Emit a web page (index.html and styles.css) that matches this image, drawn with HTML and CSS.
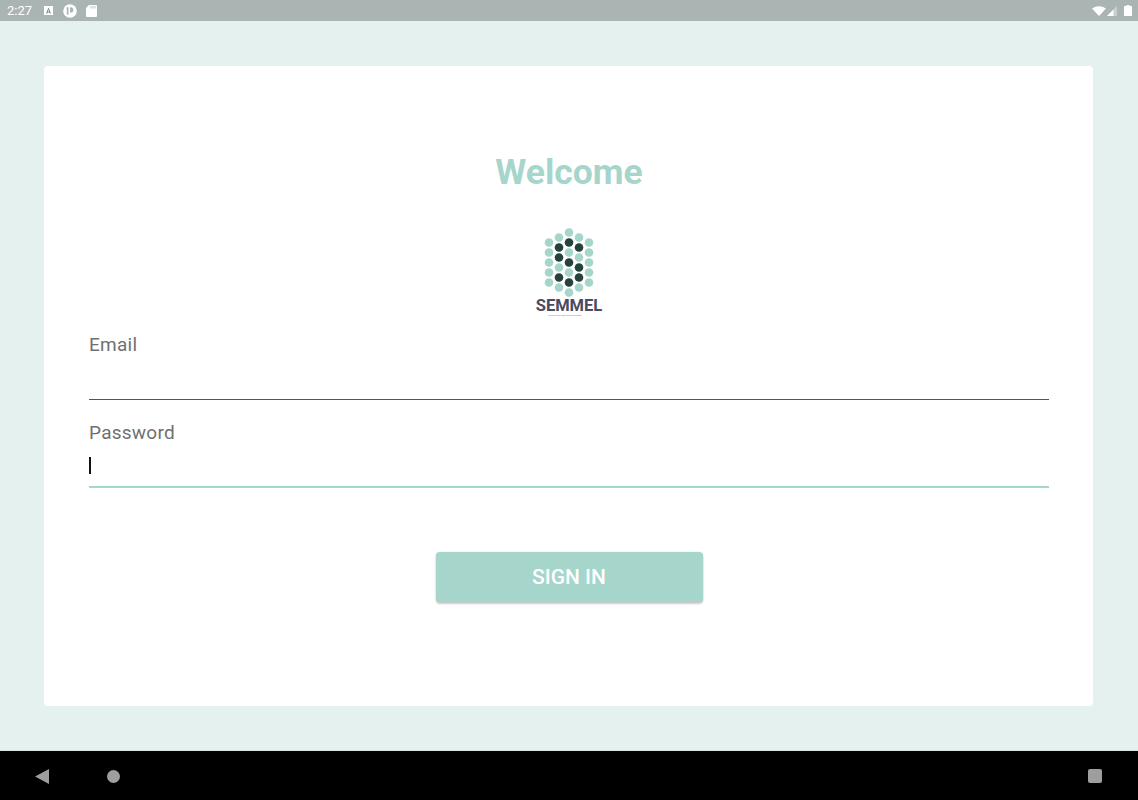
FILE: index.html
```html
<!DOCTYPE html>
<html lang="en">
<head>
    <meta charset="UTF-8">
    <title>Sign in</title>
    <link rel="stylesheet" href="styles.css">
</head>
<body>
    <div class="status-bar">
        <div class="status-left">
            <span class="clock">2:27</span>
            <svg class="icon-a" width="9" height="9" viewBox="0 0 9 9">
                <rect width="9" height="9" fill="#fff"/>
                <path fill="#7f8a89" fill-rule="evenodd" d="M4.500 1.500 2 7.500h1.200l.4-1.100h1.800l.4 1.100H7z M4.500 3.600l.6 1.800H3.900z"/>
            </svg>
            <svg class="icon-p" width="14" height="14" viewBox="0 0 14 14">
                <circle cx="7" cy="7" r="6.800" fill="#fff"/>
                <rect x="3.800" y="3.200" width="1.700" height="7.500" fill="#aab4b3"/>
                <path fill="#aab4b3" d="M7 3.200h.6a2.700 2.700 0 0 1 0 5.400H7z"/>
            </svg>
            <svg width="11" height="12" viewBox="0 0 11 12">
                <path fill="#fff" d="M3 0h7a1 1 0 0 1 1 1v10a1 1 0 0 1-1 1H1a1 1 0 0 1-1-1V3z"/>
                <path stroke="#aab4b3" stroke-width=".8" d="M5 1v2.500M7 1v2.500M9 1v2.500"/>
            </svg>
        </div>
        <div class="status-right">
            <svg class="icon-wifi" width="14" height="10" viewBox="0 0 14 10">
                <path fill="#fff" d="M0 2.500Q7-2.200 14 2.500L7 10z"/>
            </svg>
            <svg class="icon-signal" width="10" height="10" viewBox="0 0 10 10">
                <path fill="#c9cfce" d="M10 0v10H0z"/>
                <path fill="#fff" d="M6.500 3.500V10H0z"/>
            </svg>
            <svg width="8" height="11" viewBox="0 0 8 11">
                <path fill="#fff" d="M2.500 0h3v1H7.500a.5.5 0 0 1 .5.500V10.500a.5.5 0 0 1-.5.500H.5a.5.5 0 0 1-.5-.5V1.500A.5.5 0 0 1 .5 1H2.500z"/>
            </svg>
        </div>
    </div>

    <main class="screen">
        <div class="login-card">
            <h1 class="welcome">Welcome</h1>

            <div class="logo">
                <svg width="52" height="70" viewBox="0 0.500 52 70">
                    <g fill="#a6d5cb">
                        <circle cx="26" cy="5" r="4.300"/>
                        <circle cx="16" cy="10" r="4.300"/>
                        <circle cx="36" cy="10" r="4.300"/>
                        <circle cx="6" cy="15" r="4.300"/>
                        <circle cx="46" cy="15" r="4.300"/>
                        <circle cx="26" cy="25" r="4.300"/>
                        <circle cx="6" cy="25" r="4.300"/>
                        <circle cx="46" cy="25" r="4.300"/>
                        <circle cx="36" cy="30" r="4.300"/>
                        <circle cx="16" cy="40" r="4.300"/>
                        <circle cx="6" cy="35" r="4.300"/>
                        <circle cx="46" cy="35" r="4.300"/>
                        <circle cx="26" cy="45" r="4.300"/>
                        <circle cx="6" cy="45" r="4.300"/>
                        <circle cx="46" cy="45" r="4.300"/>
                        <circle cx="6" cy="55" r="4.300"/>
                        <circle cx="46" cy="55" r="4.300"/>
                        <circle cx="16" cy="60" r="4.300"/>
                        <circle cx="36" cy="60" r="4.300"/>
                        <circle cx="26" cy="65" r="4.300"/>
                    </g>
                    <g fill="#25423b">
                        <circle cx="26" cy="15" r="4.300"/>
                        <circle cx="16" cy="20" r="4.300"/>
                        <circle cx="36" cy="20" r="4.300"/>
                        <circle cx="16" cy="30" r="4.300"/>
                        <circle cx="26" cy="35" r="4.300"/>
                        <circle cx="36" cy="40" r="4.300"/>
                        <circle cx="16" cy="50" r="4.300"/>
                        <circle cx="36" cy="50" r="4.300"/>
                        <circle cx="26" cy="55" r="4.300"/>
                    </g>
                </svg>
                <div class="logo-name">SEMMEL</div>
                <div class="logo-tag">HEALTHCARE SOLUTIONS</div>
            </div>

            <div class="fields">
                <div class="field">
                    <label class="field-label" for="email">Email</label>
                    <div class="field-input" id="email"></div>
                </div>
                <div class="field field-active">
                    <label class="field-label" for="password">Password</label>
                    <div class="field-input" id="password"><span class="caret"></span></div>
                </div>
            </div>

            <button class="signin" type="button">SIGN IN</button>
        </div>
    </main>

    <div class="nav-bar">
        <div class="nav-left">
            <svg width="14" height="15" viewBox="0 0 14 15">
                <path fill="#9e9e9e" d="M14 0v15L0 7.500z"/>
            </svg>
            <svg width="13" height="13" viewBox="0 0 13 13">
                <circle cx="6.500" cy="6.500" r="6.500" fill="#9e9e9e"/>
            </svg>
        </div>
        <div class="nav-square"></div>
    </div>
</body>
</html>
```

FILE: styles.css
```css
* {
    box-sizing: border-box;
}
body {
    margin: 0;
    width: 1138px;
    height: 800px;
    display: flex;
    flex-direction: column;
    overflow: hidden;
    background-color: #e4f1ee;
    font-family: 'Roboto', sans-serif;
}

/* Barra de status */
.status-bar {
    height: 21px;
    flex-shrink: 0;
    display: flex;
    justify-content: space-between;
    align-items: center;
    padding: 0 6px 0 7px;
    background-color: #aab4b3;
}
.status-left,
.status-right {
    display: flex;
    align-items: center;
}
.clock {
    width: 37px;
    color: #fff;
    font-size: 13px;
}
.icon-a {
    margin-right: 10px;
}
.icon-p {
    margin-right: 9px;
}
.icon-wifi {
    margin-right: 1px;
}
.icon-signal {
    margin-right: 7px;
}

/* Tela principal */
.screen {
    flex: 1;
    padding: 45px 45px 44px 44px;
    border-bottom: 1px solid #d8e3e0;
}
.login-card {
    height: 640px;
    padding: 86px 44px 0 45px;
    background-color: #fff;
    border-radius: 4px;
    display: flex;
    flex-direction: column;
}
.welcome {
    margin: 0;
    height: 40px;
    line-height: 40px;
    text-align: center;
    font-size: 35.500px;
    font-weight: 700;
    color: #a6d5cb;
}
.logo {
    margin: 36px 0 15px;
    display: flex;
    flex-direction: column;
    align-items: center;
}
.logo-name {
    height: 13px;
    margin-top: 1px;
    line-height: 13px;
    font-size: 16.500px;
    font-weight: 700;
    color: #4a4a60;
}
.logo-tag {
    height: 3px;
    margin: 2px 8px 0 0;
    line-height: 3px;
    font-size: 2.500px;
    font-weight: 700;
    letter-spacing: 0.2px;
    color: #4fae9b;
    white-space: nowrap;
}
.fields {
    display: flex;
    flex-direction: column;
    gap: 20px;
}
.field {
    height: 68px;
    display: flex;
    flex-direction: column;
}
.field-label {
    height: 25px;
    padding-top: 1px;
    line-height: 24px;
    font-size: 19px;
    letter-spacing: 0.25px;
    color: #707070;
}
.field-input {
    flex: 1;
    display: flex;
    align-items: center;
    border-bottom: 1px solid #555;
}
.field-active .field-input {
    border-bottom: 2px solid #a6d5cb;
}
.caret {
    width: 2px;
    height: 17px;
    background-color: #111;
}
.signin {
    align-self: center;
    width: 267px;
    height: 50px;
    margin-top: 64px;
    padding-bottom: 2px;
    background-color: #a6d5cb;
    color: #fff;
    border: none;
    border-radius: 4px;
    box-shadow: 0 2px 2px rgba(0, 0, 0, 0.2), 0 0 2px rgba(0, 0, 0, 0.12);
    font-family: inherit;
    font-size: 21px;
    font-weight: 500;
    cursor: pointer;
}

/* Barra de navegacao */
.nav-bar {
    height: 50px;
    flex-shrink: 0;
    display: flex;
    justify-content: space-between;
    align-items: center;
    padding: 0 36px 0 35px;
    background-color: #000;
}
.nav-left {
    display: flex;
    align-items: center;
    gap: 58px;
}
.nav-square {
    width: 14px;
    height: 14px;
    border-radius: 2px;
    background-color: #9e9e9e;
}
```
